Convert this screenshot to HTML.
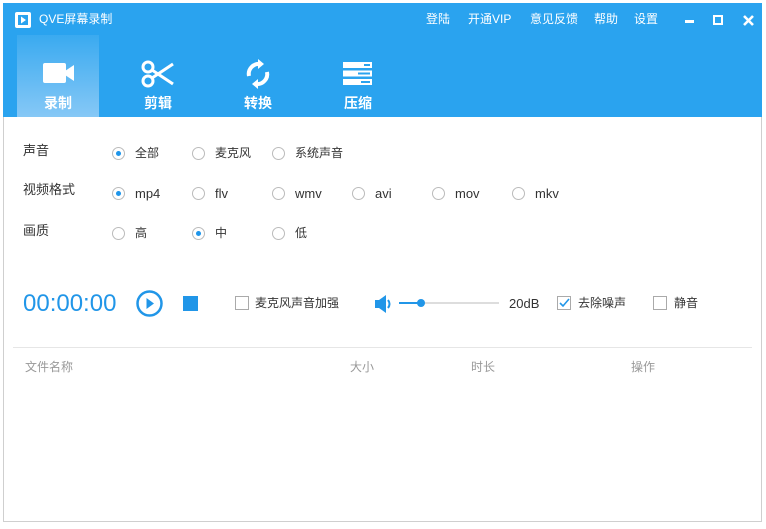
<!DOCTYPE html><html><head><meta charset="utf-8"><style>
*{margin:0;padding:0;box-sizing:border-box}
body{width:766px;height:529px;background:#fff;font-family:"Liberation Sans","Noto Sans CJK SC",sans-serif;position:relative;overflow:hidden;color:#333}
.win{position:absolute;left:3px;top:3px;width:759px;height:519px;border:1px solid #cfcfcf;border-top:none;background:#fff}
.top{position:absolute;left:3px;top:3px;width:759px;height:114px;background:#2aa3ef}
.a{position:absolute;font-size:12px;white-space:nowrap;line-height:15px}
.l{font-size:13px}
.w{color:#fff}
.tab{position:absolute;top:35px;width:82px;height:82px;text-align:center;color:#fff;font-size:14px;font-weight:bold;line-height:16px}
.tab span{position:absolute;left:0;right:0;top:60px}
.sel{background:linear-gradient(#3aaaf0,#86c8f6)}
.r{position:absolute;width:13px;height:13px;border:1px solid #bbb;border-radius:50%;background:#fff}
.r.on::after{content:"";position:absolute;left:3px;top:3px;width:5px;height:5px;border-radius:50%;background:#1e95ea}
.cb{position:absolute;width:14px;height:14px;border:1px solid #aaa;background:#fff}
.g{color:#999}
</style></head><body>
<div class="win"></div>
<div class="top"></div>
<svg style="position:absolute;left:14px;top:11px" width="18" height="18" viewBox="0 0 18 18"><rect x="1" y="1" width="16" height="16" rx="2" fill="#fff"/><rect x="4" y="4" width="10" height="10" fill="#2aa3ef"/><path d="M7 5.5L12 9L7 12.5Z" fill="#fff"/></svg>
<div class="a w" style="left:39px;top:12px;font-size:12px">QVE屏幕录制</div>
<div class="a w" style="left:426px;top:12px">登陆</div>
<div class="a w" style="left:468px;top:12px">开通VIP</div>
<div class="a w" style="left:530px;top:12px">意见反馈</div>
<div class="a w" style="left:594px;top:12px">帮助</div>
<div class="a w" style="left:634px;top:12px">设置</div>
<div style="position:absolute;left:685px;top:20px;width:9px;height:3px;background:#fff"></div>
<div style="position:absolute;left:713px;top:15px;width:10px;height:10px;border:2px solid #fff"></div>
<svg style="position:absolute;left:743px;top:15px" width="11" height="11"><path d="M1 1L10 10M10 1L1 10" stroke="#fff" stroke-width="2.6"/></svg>
<div class="tab sel" style="left:17px"><svg style="position:absolute;left:26px;top:28px" width="32" height="20"><rect x="0" y="0" width="23" height="20" rx="2" fill="#fff"/><path d="M22 8L31 2V18L22 12Z" fill="#fff"/></svg><span>录制</span></div>
<div class="tab" style="left:117px"><svg style="position:absolute;left:24px;top:25px" width="34" height="28" viewBox="0 0 34 28"><circle cx="7" cy="7" r="5" fill="none" stroke="#fff" stroke-width="3"/><circle cx="7" cy="21" r="5" fill="none" stroke="#fff" stroke-width="3"/><path d="M11 10L32 24M11 18L32 4" stroke="#fff" stroke-width="3"/></svg><span>剪辑</span></div>
<div class="tab" style="left:217px"><svg style="position:absolute;left:27px;top:23px" width="28" height="32" viewBox="0 0 28 32"><path d="M5 18A10 10 0 0 1 16 6" fill="none" stroke="#fff" stroke-width="4"/><path d="M14 1L20 6L14 11Z" fill="#fff"/><path d="M23 14A10 10 0 0 1 12 26" fill="none" stroke="#fff" stroke-width="4"/><path d="M14 21L8 26L14 31Z" fill="#fff"/></svg><span>转换</span></div>
<div class="tab" style="left:317px"><svg style="position:absolute;left:26px;top:27px" width="30" height="23"><rect x="0" y="0" width="29" height="6" fill="#fff"/><rect x="0" y="8.5" width="29" height="6" fill="#fff"/><rect x="0" y="17" width="29" height="6" fill="#fff"/><rect x="21" y="2" width="6" height="2" fill="#2aa3ef"/><rect x="15" y="10.5" width="12" height="2" fill="#2aa3ef"/><rect x="18" y="19" width="9" height="2" fill="#2aa3ef"/></svg><span>压缩</span></div>

<div class="a l" style="left:23px;top:143px">声音</div>
<div class="r on" style="left:112px;top:147px"></div><div class="a" style="left:135px;top:146px">全部</div>
<div class="r" style="left:192px;top:147px"></div><div class="a" style="left:215px;top:146px">麦克风</div>
<div class="r" style="left:272px;top:147px"></div><div class="a" style="left:295px;top:146px">系统声音</div>

<div class="a l" style="left:23px;top:182px">视频格式</div>
<div class="r on" style="left:112px;top:187px"></div><div class="a l" style="left:135px;top:186px">mp4</div>
<div class="r" style="left:192px;top:187px"></div><div class="a l" style="left:215px;top:186px">flv</div>
<div class="r" style="left:272px;top:187px"></div><div class="a l" style="left:295px;top:186px">wmv</div>
<div class="r" style="left:352px;top:187px"></div><div class="a l" style="left:375px;top:186px">avi</div>
<div class="r" style="left:432px;top:187px"></div><div class="a l" style="left:455px;top:186px">mov</div>
<div class="r" style="left:512px;top:187px"></div><div class="a l" style="left:535px;top:186px">mkv</div>

<div class="a l" style="left:23px;top:223px">画质</div>
<div class="r" style="left:112px;top:227px"></div><div class="a" style="left:135px;top:226px">高</div>
<div class="r on" style="left:192px;top:227px"></div><div class="a" style="left:215px;top:226px">中</div>
<div class="r" style="left:272px;top:227px"></div><div class="a" style="left:295px;top:226px">低</div>

<div class="a" style="left:23px;top:290px;font-size:24px;line-height:28px;color:#2196e8">00:00:00</div>
<svg style="position:absolute;left:136px;top:290px" width="27" height="27"><circle cx="13.5" cy="13.5" r="12" fill="none" stroke="#2196e8" stroke-width="2.5"/><path d="M10.5 8L18 13.5L10.5 19Z" fill="#2196e8"/></svg>
<div style="position:absolute;left:183px;top:296px;width:15px;height:15px;background:#2196e8"></div>
<div class="cb" style="left:235px;top:296px"></div><div class="a" style="left:255px;top:296px">麦克风声音加强</div>
<svg style="position:absolute;left:375px;top:295px" width="18" height="18"><path d="M0 5H4L11 0V18L4 13H0Z" fill="#2196e8"/><path d="M13 5Q16 9 13 13" fill="none" stroke="#2196e8" stroke-width="2"/></svg>
<div style="position:absolute;left:399px;top:302px;width:100px;height:2px;background:#ddd"></div>
<div style="position:absolute;left:399px;top:302px;width:22px;height:2px;background:#2196e8"></div>
<div style="position:absolute;left:417px;top:299px;width:8px;height:8px;border-radius:50%;background:#2196e8"></div>
<div class="a l" style="left:509px;top:296px">20dB</div>
<div class="cb" style="left:557px;top:296px"><svg width="12" height="12" style="position:absolute;left:0;top:0"><path d="M2 6L5 9L11 2" fill="none" stroke="#2196e8" stroke-width="1.6"/></svg></div><div class="a" style="left:578px;top:296px">去除噪声</div>
<div class="cb" style="left:653px;top:296px"></div><div class="a" style="left:674px;top:296px">静音</div>

<div style="position:absolute;left:13px;top:347px;width:739px;height:1px;background:#e6e6e6"></div>
<div class="a g" style="left:25px;top:360px">文件名称</div>
<div class="a g" style="left:350px;top:360px">大小</div>
<div class="a g" style="left:471px;top:360px">时长</div>
<div class="a g" style="left:631px;top:360px">操作</div>
</body></html>
